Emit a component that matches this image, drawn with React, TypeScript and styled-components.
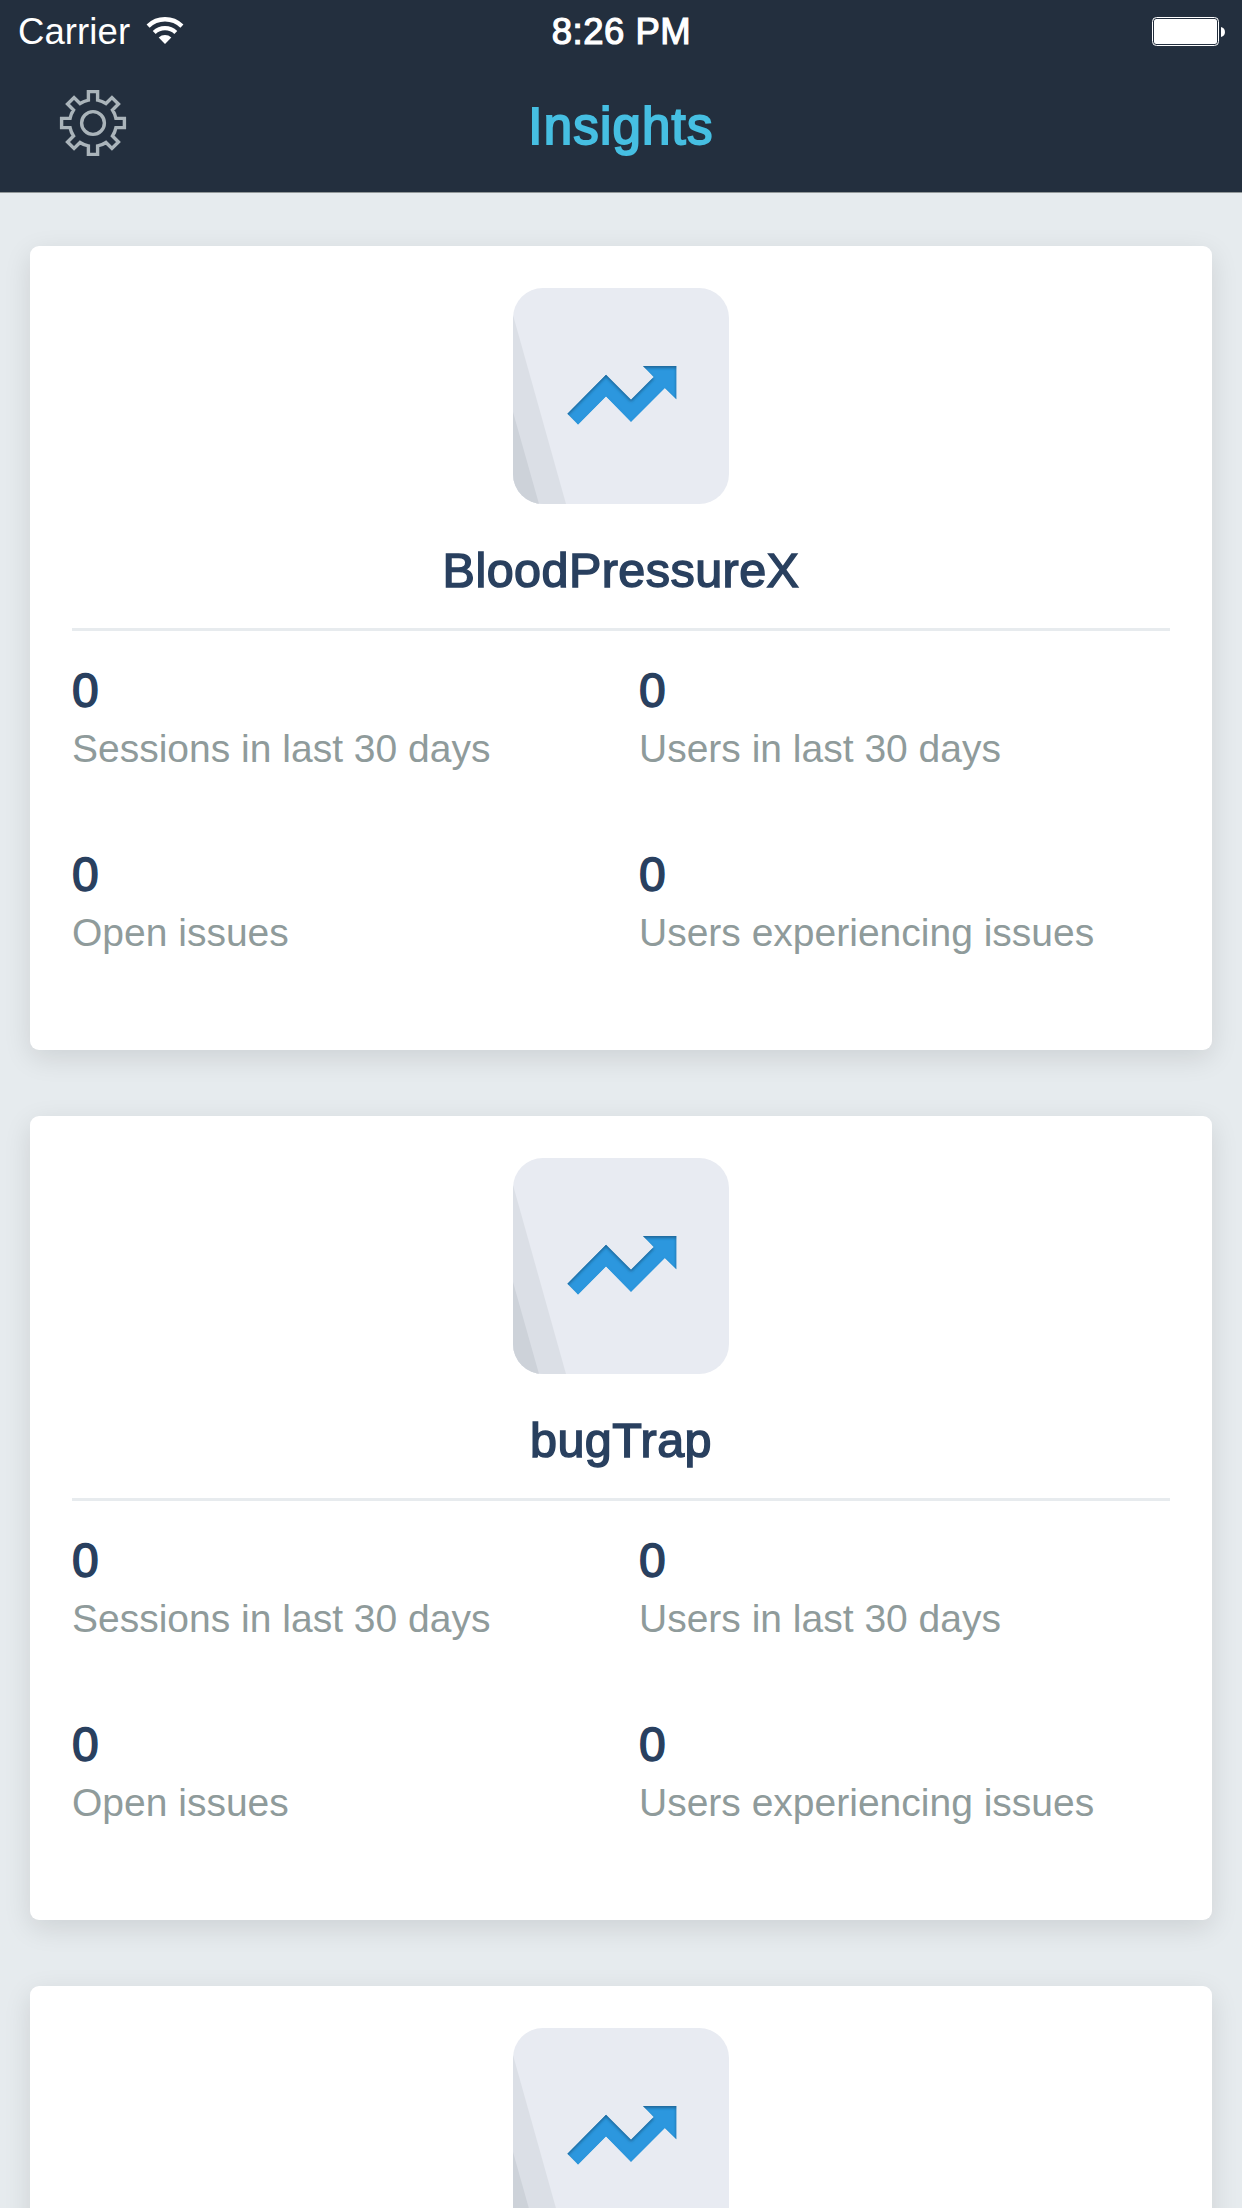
import React from "react";
import styled, { createGlobalStyle } from "styled-components";

const GlobalStyle = createGlobalStyle`
  * { box-sizing: border-box; }
  html, body { margin: 0; padding: 0; background: #e6ebee; }
  body {
    font-family: "Liberation Sans", Arial, Helvetica, sans-serif;
    overflow: hidden;
  }
`;

const Screen = styled.div`
  width: 1242px;
  height: 2208px;
  overflow: hidden;
  background: #e6ebee;
`;

const Header = styled.header`
  height: 193px;
  background: #232f3e;
  border-bottom: 1px solid #929899;
`;

const StatusBar = styled.div`
  display: grid;
  grid-template-columns: 1fr auto 1fr;
  align-items: center;
  height: 61px;
  padding: 0 17px 0 18px;
  color: #fff;
  font-size: 36.5px;
  line-height: 60px;
`;

const CarrierGroup = styled.div`
  display: flex;
  align-items: center;
  gap: 16px;
`;

const Carrier = styled.span`
  padding-top: 2px;
  letter-spacing: 0.1px;
`;

const Clock = styled.span`
  padding-top: 2px;
  letter-spacing: 0.5px;
  -webkit-text-stroke: 1.2px #fff;
`;

const BatteryGroup = styled.div`
  display: flex;
  justify-content: flex-end;
`;

const NavBar = styled.div`
  display: grid;
  grid-template-columns: 1fr auto 1fr;
  align-items: start;
  height: 131px;
  padding: 27px 58px 0;
`;

const SettingsButton = styled.button`
  display: flex;
  width: 70px;
  height: 70px;
  padding: 0;
  border: 0;
  background: none;
`;

const NavTitle = styled.h1`
  margin: 7px 0 0;
  font-size: 51px;
  font-weight: 400;
  line-height: 64px;
  letter-spacing: 1.2px;
  color: #46bfe2;
  -webkit-text-stroke: 1.9px #46bfe2;
`;

const Feed = styled.main`
  display: flex;
  flex-direction: column;
  gap: 66px;
  padding: 53px 30px 0;
`;

const Card = styled.article`
  flex: none;
  display: flex;
  flex-direction: column;
  height: 804px;
  padding: 42px 42px 0;
  border-radius: 9px;
  background: #fff;
  box-shadow: 0 8px 28px rgba(0, 0, 0, 0.11);
`;

const Tile = styled.div`
  align-self: center;
  width: 216px;
  height: 216px;
  overflow: hidden;
  border-radius: 30px;
  background: #e8ebf2;
`;

const AppName = styled.h2`
  margin: 37px 0 29px;
  text-align: center;
  font-size: 48.5px;
  font-weight: 400;
  line-height: 58px;
  letter-spacing: 0.45px;
  color: #29405f;
  -webkit-text-stroke: 1.5px #29405f;
`;

const Divider = styled.hr`
  width: 100%;
  height: 3px;
  margin: 0 0 31px;
  border: 0;
  background: #e7ebee;
`;

const Stats = styled.dl`
  display: grid;
  grid-template-columns: 567px 1fr;
  row-gap: 73px;
  margin: 0;
`;

const Stat = styled.div`
  display: flex;
  flex-direction: column-reverse;
  gap: 5px;
`;

const StatValue = styled.dd`
  margin: 0;
  font-size: 48px;
  line-height: 58px;
  color: #29405f;
  -webkit-text-stroke: 1.5px #29405f;
`;

const StatLabel = styled.dt`
  font-size: 39px;
  line-height: 48px;
  white-space: nowrap;
  color: #8f9b9b;
`;

const WifiIcon = () => (
  <svg width="38" height="28" viewBox="0 0 38 28" fill="none">
    <path d="M2.1 9.1A24.3 24.3 0 0 1 35.9 9.1" stroke="#fff" strokeWidth="4.4" />
    <path d="M8.2 15.4A15.6 15.6 0 0 1 29.8 15.4" stroke="#fff" strokeWidth="4.2" />
    <path d="M19 27L12.7 20.4A9.2 9.2 0 0 1 25.3 20.4Z" fill="#fff" />
  </svg>
);

const BatteryIcon = () => (
  <svg width="73" height="29" viewBox="0 0 73 29">
    <rect x="0.5" y="0.5" width="66" height="28" rx="4" fill="none" stroke="#fff" />
    <rect x="2" y="2" width="63" height="25" rx="2.5" fill="#fff" />
    <path d="M69 10C74.3 11 74.3 19 69 20Z" fill="#fff" />
  </svg>
);

const buildGearPath = () => {
  const half = 4.6;
  const tip = 31.4;
  const base = 23.4;
  const root = -Math.sqrt(base * base - half * half);
  const parts: string[] = [];
  for (let i = 0; i < 8; i++) {
    const a = (i * Math.PI) / 4;
    const at = (x: number, y: number) =>
      `${(35 + x * Math.cos(a) - y * Math.sin(a)).toFixed(2)} ${(35 + x * Math.sin(a) + y * Math.cos(a)).toFixed(2)}`;
    parts.push(i === 0 ? `M${at(-half, root)}` : `A${base} ${base} 0 0 1 ${at(-half, root)}`);
    parts.push(`L${at(-half, -tip)}L${at(half, -tip)}L${at(half, root)}`);
  }
  return `${parts.join("")}A${base} ${base} 0 0 1 ${(35 - half).toFixed(2)} ${(35 + root).toFixed(2)}Z`;
};

const GEAR_PATH = buildGearPath();

const GearIcon = () => (
  <svg width="70" height="70" viewBox="0 0 70 70" fill="none" stroke="#aab4ba" strokeWidth="3.4">
    <path d={GEAR_PATH} />
    <circle cx="35" cy="35" r="11.4" />
  </svg>
);

const ARROW =
  "M54.4 125.7L93 86.7L118 111.7L140.7 89L130 78H163.3V111.3L151.7 100L118 133.7L93 108.3L65 136.6Z";

const TrendIcon = ({ id }: { id: string }) => (
  <svg width="216" height="216" viewBox="0 0 216 216">
    <defs>
      <clipPath id={`arrow-${id}`}>
        <path d={ARROW} />
      </clipPath>
      <filter id={`soft-${id}`} x="-10%" y="-20%" width="120%" height="140%">
        <feGaussianBlur stdDeviation="1.6" />
      </filter>
    </defs>
    <path d="M0 27L53 216H0Z" fill="#dbdfe6" />
    <path d="M0 124L26 216H0Z" fill="#cdd2d9" />
    <path d={ARROW} fill="#2c97de" />
    <g clipPath={`url(#arrow-${id})`}>
      <path
        d={`M30 50H190V160H30Z${ARROW}`}
        transform="translate(0 2)"
        fill="#1d6699"
        fillRule="evenodd"
        filter={`url(#soft-${id})`}
      />
      <path
        d="M163 114L151.7 103M151.7 100L118 133.7L93 108.3L65 136.3"
        fill="none"
        stroke="#2c97de"
        strokeWidth="3"
      />
    </g>
  </svg>
);

const apps = [
  { id: "bpx", name: "BloodPressureX" },
  { id: "bugtrap", name: "bugTrap" },
  { id: "third", name: "" },
];

const stats = [
  { label: "Sessions in last 30 days", value: 0 },
  { label: "Users in last 30 days", value: 0 },
  { label: "Open issues", value: 0 },
  { label: "Users experiencing issues", value: 0 },
];

export default function App() {
  return (
    <>
      <GlobalStyle />
      <Screen>
        <Header>
          <StatusBar>
            <CarrierGroup>
              <Carrier>Carrier</Carrier>
              <WifiIcon />
            </CarrierGroup>
            <Clock>8:26 PM</Clock>
            <BatteryGroup>
              <BatteryIcon />
            </BatteryGroup>
          </StatusBar>
          <NavBar>
            <SettingsButton aria-label="Settings">
              <GearIcon />
            </SettingsButton>
            <NavTitle>Insights</NavTitle>
          </NavBar>
        </Header>
        <Feed>
          {apps.map((app) => (
            <Card key={app.id}>
              <Tile>
                <TrendIcon id={app.id} />
              </Tile>
              {app.name && (
                <>
                  <AppName>{app.name}</AppName>
                  <Divider />
                  <Stats>
                    {stats.map((stat) => (
                      <Stat key={stat.label}>
                        <StatLabel>{stat.label}</StatLabel>
                        <StatValue>{stat.value}</StatValue>
                      </Stat>
                    ))}
                  </Stats>
                </>
              )}
            </Card>
          ))}
        </Feed>
      </Screen>
    </>
  );
}
